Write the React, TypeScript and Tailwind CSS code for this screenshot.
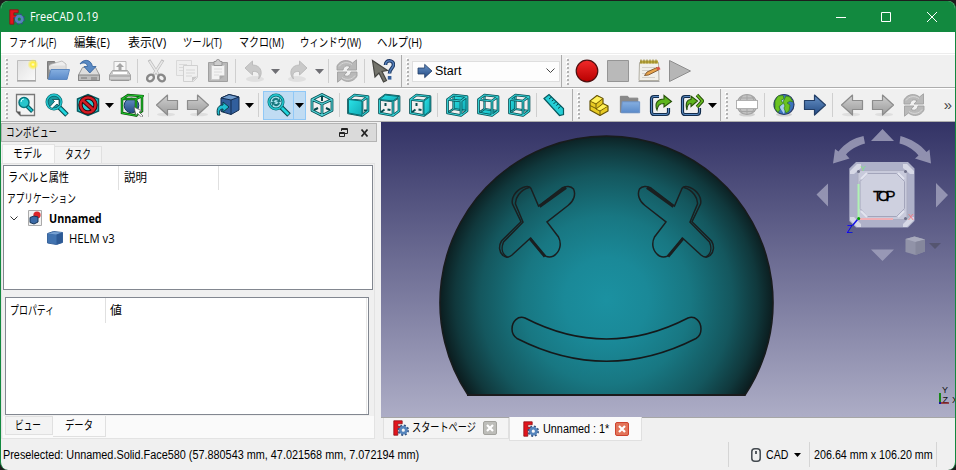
import { useLayoutEffect, useRef, useState, type ReactNode } from "react";

/* A single line of text, condensed or widened horizontally to its column width. */
function Fit({ w, className = "", children }: { w: number; className?: string; children: ReactNode }) {
  const ref = useRef<HTMLSpanElement>(null);
  const [s, setS] = useState(1);
  useLayoutEffect(() => {
    const measure = () => {
      if (ref.current && ref.current.offsetWidth) setS(w / ref.current.offsetWidth);
    };
    measure();
    document.fonts?.ready.then(measure);
  }, [w]);
  return (
    <span className={`flex shrink-0 ${className}`} style={{ width: w }}>
      <span ref={ref} className="block shrink-0 origin-left whitespace-nowrap" style={{ transform: `scaleX(${s})` }}>
        {children}
      </span>
    </span>
  );
}

function Svg({ children, size = 24 }: { children: ReactNode; size?: number }) {
  return (
    <svg width={size} height={size} viewBox="0 0 24 24" className="shrink-0">
      {children}
    </svg>
  );
}

function Logo({ size = 16 }: { size?: number }) {
  return (
    <svg width={size} height={size} viewBox="0 0 16 16" className="shrink-0">
      <path d="M.8.8h8.400v3H4.800v2.500h3v2.500h-3v6.400h-4z" fill="#e3141c" stroke="#8b1217" strokeWidth=".8" />
      <circle cx="10.300" cy="10.200" r="4.600" fill="none" stroke="#31517f" strokeWidth="2.200" strokeDasharray="1.9 1.71" />
      <circle cx="10.300" cy="10.200" r="3" fill="none" stroke="#5585bd" strokeWidth="2.800" />
    </svg>
  );
}

function Handle() {
  return (
    <div className="flex w-[10px] shrink-0 justify-center">
      <svg width="3" height="27" viewBox="0 0 3 27">
        {[0, 4, 8, 12, 16, 20, 24].map((y) => (
          <g key={y}>
            <rect x="0" y={y} width="2" height="2" fill="#fff" />
            <rect x="1" y={y + 1} width="2" height="2" fill="#b3b3b3" />
          </g>
        ))}
      </svg>
    </div>
  );
}

const Sep = () => (
  <div className="flex w-[5px] shrink-0 justify-center">
    <div className="h-6 w-px bg-[#cfcfcf]" />
  </div>
);
const Edge = () => <div className="h-full w-px shrink-0 bg-[#adadad]" />;
const Cell = ({ children }: { children: ReactNode }) => (
  <div className="flex w-[31px] shrink-0 items-center justify-center">{children}</div>
);
const Drop = ({ gray = false, small = false }: { gray?: boolean; small?: boolean }) => (
  <div className="flex w-[13px] shrink-0 justify-center">
    <svg width={small ? 7 : 9} height={small ? 4 : 5} viewBox="0 0 9 5">
      <path d="M0 0h9L4.500 5z" fill={gray ? "#6f6f74" : "#000"} />
    </svg>
  </div>
);

const Defs = () => (
  <svg width="0" height="0" className="absolute">
    <defs>
      <linearGradient id="gray" x2="0" y2="1"><stop stopColor="#d0d0d0" /><stop offset="1" stopColor="#9b9b9b" /></linearGradient>
      <linearGradient id="paper" x2="1" y2="1"><stop stopColor="#e1e1e1" /><stop offset="1" stopColor="#fafafa" /></linearGradient>
      <linearGradient id="blue" x2="0" y2="1"><stop stopColor="#86afe0" /><stop offset="1" stopColor="#5a8ac9" /></linearGradient>
      <linearGradient id="navy" x2="0" y2="1"><stop stopColor="#6792c7" /><stop offset="1" stopColor="#244b84" /></linearGradient>
      <linearGradient id="red" x2="0" y2="1"><stop stopColor="#f22a2a" /><stop offset="1" stopColor="#b80000" /></linearGradient>
      <linearGradient id="cyan" x2="1" y2="1"><stop stopColor="#2ae4e8" /><stop offset="1" stopColor="#12aab5" /></linearGradient>
      <radialGradient id="glow"><stop stopColor="#fffde0" /><stop offset=".4" stopColor="#ffee3a" /><stop offset="1" stopColor="#ffee3a" stopOpacity="0" /></radialGradient>
    </defs>
  </svg>
);

const NewDoc = () => (
  <Svg>
    <path d="M2.500 1.500h18v20h-18z" fill="url(#paper)" stroke="#bdbdbd" />
    <path d="M2 22h19" stroke="#8d8d8d" />
    <circle cx="18" cy="5.500" r="5.500" fill="url(#glow)" />
  </Svg>
);
const OpenDoc = () => (
  <Svg>
    <path d="M1.500 20V2.500h7l1 2h9V20z" fill="#8f8f8f" stroke="#7d7d7d" />
    <path d="M4 5.500l12-3.500 4 3v8H4z" fill="#eee" stroke="#aaa" strokeWidth=".7" />
    <path d="M3 6.500h16v4H3z" fill="#ddd" />
    <path d="M5 10.500h18.500L21 20.500H2.500z" fill="url(#blue)" stroke="#5c88c0" />
  </Svg>
);
const Save = () => (
  <Svg>
    <path d="M5.500 8.500h13l4 7.500v5.500h-21V16z" fill="#ddd" stroke="#989898" />
    <path d="M1.500 16h21v5.500h-21z" fill="#bdbdbd" stroke="#858585" />
    <path d="M4 19h6M15 18v3M17 18v3M19 18v3" stroke="#777" />
    <path d="M3 5C6-.2 14-.2 15.500 7.500H19L12.800 14 7 7.500h3.500C10 4 7 3 3 5z" fill="#5a8ac4" stroke="#315f9b" strokeWidth=".8" />
  </Svg>
);
const Print = () => (
  <Svg>
    <path d="M6 2.500h12v10H6z" fill="#f7f7f7" stroke="#bbb" />
    <path d="m12 4 4 4h-2.500v3h-3V8H8z" fill="#a5a5a5" />
    <path d="M4.500 11.500h15l3 4.500v5h-21v-5z" fill="#ccc" stroke="#a5a5a5" />
    <path d="M5 13h14v2H5z" fill="#fff" />
    <path d="M2 17h20M3 21.500h18" stroke="#999" />
  </Svg>
);
const Cut = () => (
  <Svg>
    <path d="m5 1 9.500 15M19 1 9.500 16" stroke="#bcbcbc" strokeWidth="3" />
    <path d="m5.500 2 8.500 13M18.500 2 10 15" stroke="#e8e8e8" strokeWidth="1.500" />
    <ellipse cx="6.500" cy="19" rx="3.600" ry="3" fill="none" stroke="#888" strokeWidth="2.400" transform="rotate(-35 6.500 19)" />
    <ellipse cx="17.500" cy="19" rx="3.600" ry="3" fill="none" stroke="#888" strokeWidth="2.400" transform="rotate(35 17.500 19)" />
  </Svg>
);
const Copy = () => (
  <Svg>
    <path d="M1.500 1.500h15v15h-15z" fill="#eee" stroke="#d9d9d9" />
    <path d="M4 5.500h8M4 8.500h5M4 11.500h5" stroke="#dadada" />
    <path d="M8.500 6.500h14v12l-4 4h-10z" fill="#f0f0f0" stroke="#d0d0d0" />
    <path d="M11 11h9M11 14h9M11 17h6" stroke="#d6d6d6" />
    <path d="M17 22.500V18l5.500-.5z" fill="#c8c8c8" />
  </Svg>
);
const Paste = () => (
  <Svg>
    <path d="M2.500 3.500h19v19h-19z" fill="#b9b9b9" stroke="#a0a0a0" />
    <path d="M5.500 6.500h13v10l-4 4h-9z" fill="#f3f3f3" stroke="#ccc" />
    <path d="M8 10h8M8 13h8M8 16h5" stroke="#dadada" />
    <path d="M8 2.500h2a2 2 0 0 1 4 0h2v4H8z" fill="#ccc" stroke="#979797" />
    <path d="M13.500 21.500v-5h5.500z" fill="#aaa" />
  </Svg>
);
const Undo = ({ flip = false }: { flip?: boolean }) => (
  <Svg>
    <g transform={flip ? "translate(24 0) scale(-1 1)" : undefined}>
      <ellipse cx="13" cy="20" rx="9" ry="3" fill="#e0e0e0" />
      <path d="M3 9 10.500 2v4c9 0 11 9 6 14 2-6-1-8-6-7.500V16z" fill="#c9c9c9" stroke="#bcbcbc" strokeLinejoin="round" />
    </g>
  </Svg>
);
const Refresh = () => (
  <Svg>
    <path d="M2 11V7C5 1 13 0 17.500 4L21.500.8V11H12l3-3.200c-3-2-6-1-7 3.200z" fill="#b9b9b9" stroke="#a0a0a0" strokeWidth=".9" strokeLinejoin="round" />
    <path d="M22 13v4c-3 6-11 7-15.500 3l-4 3.200V13H12l-3 3.200c3 2 6 1 7-3.200z" fill="#b9b9b9" stroke="#a0a0a0" strokeWidth=".9" strokeLinejoin="round" />
    <path d="M4 7.500C7 3 13 2.500 17 5.500M20 16.500c-3 4.500-9 5-13 2" stroke="#d6d6d6" fill="none" />
  </Svg>
);
const Whats = () => (
  <Svg>
    <path d="m1.500 1.500 15 10-5.500 1 4.500 9-3 1.500-4.500-9-4 4z" fill="#74746c" stroke="#454541" strokeWidth="1.200" />
    <path d="M14.500 6c0-6 8-5 8-.500 0 4-4 3.500-4 9" fill="none" stroke="#203c66" strokeWidth="3.600" />
    <path d="M14.500 6c0-6 8-5 8-.500 0 4-4 3.500-4 9" fill="none" stroke="#5884c0" strokeWidth="1.300" />
    <rect x="16.800" y="17" width="3.600" height="3.600" fill="#345e99" />
  </Svg>
);
const ArrowR = ({ blue = false, flip = false, size = 24 }: { blue?: boolean; flip?: boolean; size?: number }) => (
  <Svg size={size}>
    <g transform={flip ? "translate(24 0) scale(-1 1)" : undefined}>
      {!blue && <ellipse cx="13" cy="21.500" rx="9" ry="1.800" fill="#dedede" />}
      <path d="M1.500 7.500h10V2L22.500 12 11.500 22v-5.500h-10z" fill={blue ? "url(#navy)" : "url(#gray)"} stroke={blue ? "#243f67" : "#8c8c8c"} strokeWidth="1.200" strokeLinejoin="round" />
    </g>
  </Svg>
);
const Note = () => (
  <Svg>
    <path d="M2.500 3.500h19l.5 18H2z" fill="#f0efe9" stroke="#b1aea3" />
    <path d="M3 1.500h18v3H3z" fill="#bba83b" />
    <path d="M4 .500v4M7 .500v4M10 .500v4M13 .500v4M16 .500v4M19 .500v4" stroke="#8d7c27" />
    <path d="M5 8.500h13M5 11.500h11M5 14.500h4M5 18.500h13" stroke="#d2d0c9" />
    <path d="m7.500 16.500 2.500-3.500 10-4.500 1.500 2.500-10 5z" fill="#e8a34a" stroke="#69451e" strokeWidth=".8" />
    <path d="m19 8.800 3-1.300 1.500 2.700-3 1.300z" fill="#d75348" />
    <path d="M1.500 22.500h21" stroke="#a4a4a4" />
  </Svg>
);
const Lens = ({ kind }: { kind: "page" | "arrow" | "sync" }) => (
  <Svg>
    {kind === "page" ? (
      <g>
        <path d="M2.500 1.500h18v21H6.500l-4-4z" fill="#f3f3f3" stroke="#777" strokeWidth="1.300" />
        <path d="M2.500 18.500h4v4z" fill="#555" />
        <path d="m13 13 5.500 5.500" stroke="#07585f" strokeWidth="4" />
        <path d="m13 13 5 5" stroke="#18c0cb" strokeWidth="2" />
        <circle cx="10" cy="9.500" r="5" fill="#27c5cc" stroke="#07747b" strokeWidth="1.500" />
        <path d="M7 9a3 3 0 0 1 3-3" stroke="#c5ffff" fill="none" />
      </g>
    ) : (
      <g>
        <path d="m13 13 9 9" stroke="#07474c" strokeWidth="5" />
        <path d="m13 13 8.500 8.500" stroke="#20d5dd" strokeWidth="2.800" />
        <circle cx="9" cy="9" r="7" fill={kind === "arrow" ? "#1b98a0" : "#a9e3ee"} stroke="#07656b" strokeWidth="3" />
        <circle cx="9" cy="9" r="7.100" fill="none" stroke="#21c5cd" strokeWidth="1.600" />
        {kind === "arrow" ? (
          <path d="m5 13.500 4.500-5L7.500 6.500h6.500v6.500L12 11l-5 4.500z" fill="#fff" stroke="#07464b" strokeWidth=".8" />
        ) : (
          <path d="M5 8c1-4 6-4 7-1V4l2 5H9l2-1c-2-2-4-1-4 1zM13 10c-1 4-6 4-7 1v3L4 9h5l-2 1c2 2 4 1 4-1z" fill="#18777d" />
        )}
      </g>
    )}
  </Svg>
);
const NoSel = () => (
  <Svg>
    <path d="m1.500 6 10.500-4.500L22.500 6v12l-10.500 4.500L1.500 18z" fill="#2cc7ce" stroke="#075c62" strokeWidth="1.500" />
    <circle cx="12" cy="12" r="7.500" fill="none" stroke="#37060a" strokeWidth="4.400" />
    <path d="m6.500 7 11 10" stroke="#37060a" strokeWidth="4.400" />
    <circle cx="12" cy="12" r="7.500" fill="none" stroke="#d41c23" strokeWidth="2.400" />
    <path d="m6.500 7 11 10" stroke="#d41c23" strokeWidth="2.400" />
  </Svg>
);
const BoxSel = () => (
  <Svg>
    <circle cx="11.500" cy="12.500" r="7.300" fill="url(#navy)" stroke="#173a66" />
    <path d="M2 6h14v16.500L2 20zM2 6l6-4 14 1-6 3M22 3v15l-6 4.500" fill="none" stroke="#084d08" strokeWidth="2.500" />
    <path d="M2 6h14v16.500L2 20zM2 6l6-4 14 1-6 3M22 3v15l-6 4.500" fill="none" stroke="#20c42c" strokeWidth="1.200" />
    <path d="m14 14 8 4-3 1 4 4-1.500 1-4-3.500-1.500 2z" fill="#fff" stroke="#555" strokeWidth=".7" />
  </Svg>
);
const LinkBox = () => (
  <Svg>
    <path d="m5 5 8-3.500L23 4v13l-8 4.500-10-3z" fill="#315f9d" stroke="#152e51" />
    <path d="m5 5 10 2 8-3-10-2.500z" fill="#709ccd" stroke="#152e51" />
    <path d="M15 7v14.500" stroke="#152e51" />
    <path d="M1.500 22C0 15 3 12 7 12V9l6 5-6 5v-3c-4 0-4 3-3 6z" fill="#20bdd0" stroke="#093e47" />
  </Svg>
);

const faces: Record<string, string> = {
  front: "M2.500 6.500 16 8v14.500L2.500 20z",
  top: "M2.500 6.500 8.500 2 22 3.500 16 8z",
  right: "M16 8l6-4.500V18l-6 4.500z",
  rear: "M8.500 2 22 3.500V18L8.500 16z",
  bottom: "M2.500 20l6-4L22 18l-6 4.500z",
  left: "M2.500 6.500l6-4.500v14l-6 4z",
};
function Cube({ face }: { face: string }) {
  const back = "M8.500 2v14L2.500 20M8.500 16 22 18";
  const short = "M8.500 10v3M3.500 19.500l4-3M10.500 16.500l3 .5";
  const frame = "M2.500 6.500 16 8v14.500L2.500 20zM2.500 6.500 8.500 2 22 3.500 16 8M22 3.500V18l-6 4.500";
  const dashed = face === "top" || face === "right";
  const rear = face === "rear" || face === "bottom" || face === "left";
  return (
    <Svg>
      {dashed && <path d={short} fill="none" stroke="#064c50" strokeWidth="2" />}
      {face === "front" && <path d="M18 17.500h4" fill="none" stroke="#064c50" strokeWidth="2" />}
      {rear && <path d={faces[face]} fill="url(#cyan)" stroke="#07666b" strokeWidth=".7" />}
      {rear && <path d={back} fill="none" stroke="#064c50" strokeWidth="2.200" />}
      {rear && <path d={back} fill="none" stroke="#35c2c7" strokeWidth=".8" />}
      <path d={frame} fill="none" stroke="#064f54" strokeWidth="2.700" strokeLinejoin="round" />
      <path d={frame} fill="none" stroke="#35cfd3" strokeWidth="1.100" strokeLinejoin="round" />
      {!rear && <path d={faces[face]} fill="url(#cyan)" stroke="#07555a" strokeWidth=".8" />}
    </Svg>
  );
}
const Iso = () => {
  const d = "M2 6.500 12 1.500l10 5v11l-10 5-10-5zM2 6.500l10 4.500 10-4.500M12 11v11.500";
  return (
    <Svg>
      <path d="M12 4v4M4 17l4-2M20 17l-4-2" stroke="#064448" strokeWidth="2" />
      <path d={d} fill="none" stroke="#064f54" strokeWidth="2.800" strokeLinejoin="round" />
      <path d={d} fill="none" stroke="#59dadd" strokeWidth="1.100" strokeLinejoin="round" />
    </Svg>
  );
};
const Ruler = () => (
  <Svg>
    <path d="m2 5.500 5-4L21.500 15.500v6l-4 1z" fill="#25ced6" stroke="#075a60" strokeWidth="1.200" />
    <path d="m9.500 4-2.500 2M11.800 6.500l-2 1.500M14 8.500 11.500 11M16.300 11l-2 1.500M18.500 13.500l-2.500 2" stroke="#064448" />
  </Svg>
);
const Part = () => (
  <Svg>
    <path d="m3 8 7-5.500 6 3v5l5 2.500v5l-8 4.500L3 17z" fill="#e8ca22" stroke="#665509" strokeWidth="1.200" strokeLinejoin="round" />
    <path d="m3 8 6 3 7-5.500M9 11v5l7-5.500M9 16l4 2 8-5M13 18v4.500M3 12.500l6 3" fill="none" stroke="#705e0b" />
    <path d="m4 8 6-4.500 5 2L9 10z" fill="#fff15b" />
    <path d="m10 16 6-4.500 4 1.700-7 4z" fill="#fff15b" />
  </Svg>
);
const Folder = () => (
  <Svg size={22}>
    <path d="M1.500 20V2.500h8l1.500 2h9.500V20z" fill="#888" stroke="#808080" />
    <path d="M3.500 8.500h19v12h-20z" fill="url(#blue)" stroke="#6a92c8" />
  </Svg>
);
const Export = ({ twice = false }: { twice?: boolean }) => (
  <Svg>
    <path d="M10 3.500H5A2.500 2.500 0 0 0 2.500 6v13A2.500 2.500 0 0 0 5 21.500h12a2.500 2.500 0 0 0 2.500-2.500v-4" fill="none" stroke="#122c4b" strokeWidth="3.200" />
    <path d="M10 3.500H5A2.500 2.500 0 0 0 2.500 6v13A2.500 2.500 0 0 0 5 21.500h12a2.500 2.500 0 0 0 2.500-2.500v-4" fill="none" stroke="#5989c0" strokeWidth="1" />
    {twice && <path d="m17 2 5.500 6-5.500 6" fill="none" stroke="#28520b" strokeWidth="3.400" />}
    {twice && <path d="m17.200 2.300 5.200 5.700-5.200 5.700" fill="none" stroke="#69bd20" strokeWidth="1.600" />}
    <path d={twice ? "M7 17C5 10 7 6.500 11 6.500V3l6.500 5-6.500 5.500v-3c-3 0-4 2-4 6.500z" : "M8 17C5 10 9 6 15 6V2.500L22.500 8.500l-7.500 5.500v-3.500c-5 0-6 2-7 6.500z"} fill="#5db51e" stroke="#28520b" strokeWidth="1.100" />
  </Svg>
);
const Globe = ({ off = false }: { off?: boolean }) => (
  <Svg>
    <ellipse cx="12" cy="21.500" rx="8" ry="2" fill="#d0d0d0" />
    <circle cx="12" cy="11.500" r="10" fill={off ? "#c2c2c2" : "#3b72bd"} stroke={off ? "#a2a2a2" : "#283c67"} strokeWidth="1.200" />
    {off ? (
      <g>
        <path d="M5 5h14M4 18.500h16M12 2v20M7 3c-3 5-3 12 0 17M17 3c3 5 3 12 0 17" fill="none" stroke="#a5a5a5" />
        <rect x="1.500" y="7.500" width="21" height="8" fill="#fff" stroke="#b0b0b0" />
      </g>
    ) : (
      <g>
        <path d="M10 3 8 15l4 6 2-9z" fill="#a9cdf3" />
        <path d="m3 8 3-5 5-.500 1 3-3 2 2 3-4 3 1 3-2 3-3-4zM14 3l4 1 3 5-3-1-3 2 3 2-1 6-3 2-2-5 1-2-2-4z" fill="#6bc322" stroke="#39811a" strokeWidth=".8" />
      </g>
    )}
  </Svg>
);

function Close({ active = false }: { active?: boolean }) {
  return (
    <svg width="14" height="14" viewBox="0 0 14 14" className="shrink-0">
      <rect x=".5" y=".5" width="13" height="13" rx="1.500" fill={active ? "#e27459" : "#bdbdb9"} stroke={active ? "#ce432f" : "#a2a29d"} />
      <path d="m4 4 6 6M10 4l-6 6" stroke="#fff" strokeWidth="2.200" />
    </svg>
  );
}

const EYE =
  "M538.500 206 531 188.500C529.500 186 526 186.300 523 187.500C515 191 511 198 512.500 204L521 221.700 501.500 241C498.500 246 499 252 503 255.500C506 258 509 257.500 512 255L530.500 238 541 252.500C545 257 549 258 553.500 256C560 252 562 244 558.500 237L547 222 568 205.500C574 201 576 194 573.500 189C571 186 566 185.500 562 188Z";

function Scene() {
  return (
    <svg width="574" height="295" viewBox="381 122 574 295" className="block shrink-0">
      <defs>
        <radialGradient id="ball" gradientUnits="userSpaceOnUse" cx="606.500" cy="300" r="168">
          <stop stopColor="#1b91a1" />
          <stop offset=".25" stopColor="#1a8998" />
          <stop offset=".5" stopColor="#187782" />
          <stop offset=".75" stopColor="#14575e" />
          <stop offset=".9" stopColor="#10383c" />
          <stop offset="1" stopColor="#0b1b1d" />
        </radialGradient>
        <linearGradient id="bg" x2="0" y2="1">
          <stop stopColor="#333366" />
          <stop offset="1" stopColor="#adadc6" />
        </linearGradient>
      </defs>
      <rect x="381" y="122" width="574" height="295" fill="url(#bg)" />
      <path d="M468 395A166.500 166.500 0 1 1 745 395Z" fill="url(#ball)" stroke="#181c1d" strokeWidth="1.600" />
      <path d="M467 395h278.500" stroke="#1b1b1d" strokeWidth="2" />
      {["", "translate(1213 0) scale(-1 1)"].map((t) => (
        <g key={t} transform={t || undefined} fill="none" stroke="#1a1f20" strokeWidth="1.500">
          <path d={EYE} />
          <path d="M529 187.500C520 190 515 198 515.500 204L523 222 503.500 242C501 248 502 254 507 257" />
          <path d="M539.500 206.500 566 187.500M530 238.500 545 256.500" strokeWidth="3" />
        </g>
      ))}
      <path
        d="M525 318Q606.500 360 688 318C695 315.500 701 321 701 329C701 333 699.500 336.500 696 338.500Q606.500 384 517 338.500C513.500 336 512 333 512 329C512 321 518 315.500 525 318Z"
        fill="none"
        stroke="#15191a"
        strokeWidth="1.500"
      />

      {/* navigation cube */}
      <g fill="#a2a2bd" fillOpacity=".82">
        <path d="M882.500 129 894 141h-23zM882.500 261 894 249.500h-23zM816.500 194.500l11.500-11v23zM948 195l-12-12v24.500z" />
        <path d="M863.500 136 865 143.500C856 146 850 150 846 154.500L849.500 158.500 833 163.500 835 149 838.500 151.500C845 143 854 138 863.500 136z" />
        <path d="M900.500 136 899.500 143.500C909 146 915 151 918.500 155.500L915 158.500 931 163.500 929.500 149.500 926.500 152C920 144 911 139 900.500 136z" />
      </g>
      <path d="M856 162h52l6.500 6.500v52.500l-6.500 6.500h-52l-6.700-6.500v-52.500z" fill="#aeb1c9" />
      <path d="M858 170.500h49v49h-49z" fill="#c8cadb" stroke="#acaec2" />
      <g fill="#d6d8e6">
        <path d="m850 171 7-7h4v4l-7 6h-4zM903 164h4l7 7v3h-4l-7-6zM850 217h4l7 7v3h-4l-7-7zM914 217v3l-7 7h-4v-3l7-7z" />
      </g>
      <path d="M867.500 173.500h29l8 8v27l-8 8h-29l-7.500-8v-27z" fill="#ced0df" stroke="#a3a5bb" />
      <path d="m861 179 6-6M898 173l6 6M861 211l6 6M898 217l6-6" stroke="#e2e4ef" strokeWidth="2" />
      <g fill="#6e7089">
        <circle cx="858.500" cy="171.500" r="1.500" /><circle cx="905.500" cy="171.500" r="1.500" /><circle cx="905.500" cy="218.500" r="1.500" />
      </g>
      <path d="M858.500 184v34" stroke="#b0f2b4" strokeWidth="2" />
      <path d="M860 219h33" stroke="#f0b0b6" strokeWidth="2" />
      <path d="m857.500 219.500-5 6" stroke="#1414e8" strokeWidth="1.500" />
      <circle cx="858.700" cy="218.500" r="1.500" fill="#00a000" />
      <g fontFamily="Liberation Sans, sans-serif">
        <text x="873" y="200.500" fontSize="15" textLength="22.500" lengthAdjust="spacing" fill="#000" stroke="#000" strokeWidth=".3">TOP</text>
        <text x="860.500" y="170.500" fontSize="8" fill="#7be57b">Y</text>
        <text x="908" y="219.500" fontSize="9" fill="#ee7f86">X</text>
        <text x="846.500" y="233" fontSize="10" fill="#0000f0">Z</text>
        <text x="942" y="392.500" fontSize="9" fill="#111">Y</text>
        <text x="942.500" y="402.500" fontSize="9" fill="#111">Z</text>
        <text x="952" y="402.500" fontSize="9" fill="#111">X</text>
      </g>
      <path d="M940 393v9" stroke="#178717" strokeWidth="2" />
      <path d="M941 403h8" stroke="#8b2020" strokeWidth="1.500" />
      <rect x="939" y="402" width="2" height="2" fill="#1616a0" />
      <path d="m905.500 239 9-2.500 10.500 3v12l-9.500 3.500-10-3z" fill="#9193a8" />
      <path d="m905.500 239 9-2.500 10.500 3-9.500 2.500z" fill="#a8aabd" />
      <path d="M915.500 242v13l9.500-3.500v-12z" fill="#85879c" />
      <path d="M929 243h12l-6 6z" fill="#555570" />
    </svg>
  );
}

const menus: [string, number, string][] = [
  ["ファイル(F)", 47, "mr-[18px]"],
  ["編集(E)", 36, "mr-[18px]"],
  ["表示(V)", 38, "mr-[17px]"],
  ["ツール(T)", 39, "mr-[17px]"],
  ["マクロ(M)", 45, "mr-[16px]"],
  ["ウィンドウ(W)", 61, "mr-[16px]"],
  ["ヘルプ(H)", 45, ""],
];

export default function App() {
  return (
    <div className="h-[470px] w-[956px] overflow-hidden bg-[#1d1d1d] pt-px font-['Liberation_Sans','Noto_Sans_CJK_JP',sans-serif] text-[12px] leading-4 text-black">
      <Defs />
      <div className="flex h-[469px] flex-col overflow-hidden rounded-lg border-x border-[#12893f] bg-[#f0f0f0]">
        {/* title bar */}
        <header className="flex h-[31px] shrink-0 items-center bg-[#12893f] pl-2 text-white">
          <Logo />
          <Fit w={68} className="ml-[5px] font-['Open_Sans',sans-serif]">FreeCAD 0.19</Fit>
          <svg width="103" height="12" viewBox="0 0 103 12" className="mr-4 ml-auto" fill="none" stroke="#fff">
            <path d="M0 6.500h10M45.500 1.500h9v9h-9zM91 1l10 10M101 1 91 11" />
          </svg>
        </header>

        <nav className="flex h-[22px] shrink-0 items-center border-b border-[#ededed] bg-white pl-2 font-['Open_Sans','Noto_Sans_CJK_JP',sans-serif]">
          {menus.map(([label, w, gap]) => (
            <Fit key={label} w={w} className={gap}>{label}</Fit>
          ))}
        </nav>

        {/* file, workbench and macro tools */}
        <div className="flex h-[34px] shrink-0 items-center border-t border-b border-t-white border-b-[#adadad]">
          <Handle />
          <Cell><NewDoc /></Cell><Cell><OpenDoc /></Cell><Cell><Save /></Cell><Cell><Print /></Cell>
          <Sep />
          <Cell><Cut /></Cell><Cell><Copy /></Cell><Cell><Paste /></Cell>
          <Sep />
          <Cell><Undo /></Cell><Drop gray /><Cell><Undo flip /></Cell><Drop gray />
          <Sep />
          <Cell><Refresh /></Cell>
          <Sep />
          <Cell><Whats /></Cell>
          <div className="ml-[3px] h-full"><Edge /></div>
          <Handle />
          <div className="flex h-[21px] w-[148px] shrink-0 items-center border border-[#dedede] bg-[#fdfdfd] pr-1 pl-[4px]">
            <ArrowR blue size={16} />
            <Fit w={26} className="ml-[2px]">Start</Fit>
            <svg width="9" height="6" viewBox="0 0 9 6" className="ml-auto" fill="none" stroke="#444"><path d="m.5.5 4 4 4-4" /></svg>
          </div>
          <div className="ml-[1px] h-full"><Edge /></div>
          <div className="-mr-px"><Handle /></div>
          <Cell><Svg><circle cx="12" cy="12" r="10.800" fill="url(#red)" stroke="#4d1010" strokeWidth="1.200" /></Svg></Cell>
          <Cell><Svg><path d="M1.500 1.500h21v21h-21z" fill="#b9b9b9" stroke="#959595" /></Svg></Cell>
          <Cell><Note /></Cell>
          <Cell><Svg><path d="M1.500 1.500 22.500 12l-21 10.500z" fill="#b6b6b6" stroke="#8e8e8e" /></Svg></Cell>
        </div>

        {/* view, structure and navigation tools */}
        <div className="flex h-[34px] shrink-0 items-center border-t border-b border-t-white border-b-[#adadad]">
          <div className="-mr-px"><Handle /></div>
          <Cell><Lens kind="page" /></Cell><Cell><Lens kind="arrow" /></Cell><Cell><NoSel /></Cell>
          <Drop />
          <div className="-mr-px"><Cell><BoxSel /></Cell></div>
          <Sep />
          <Cell><ArrowR flip /></Cell><Cell><ArrowR /></Cell>
          <div className="-ml-px"><Cell><LinkBox /></Cell></div>
          <Drop />
          <div className="mr-[2px]"><Sep /></div>
          <div className="flex h-[29px] shrink-0 items-center border border-[#90c8f6] bg-[#c0dcf3]">
            <div className="flex h-full w-[30px] items-center justify-center border-r border-[#90c8f6]"><Lens kind="sync" /></div>
            <div className="flex w-[11px] justify-center"><Drop /></div>
          </div>
          <Cell><Iso /></Cell>
          <Sep />
          <Cell><Cube face="front" /></Cell><Cell><Cube face="top" /></Cell><Cell><Cube face="right" /></Cell>
          <div className="mr-px"><Sep /></div>
          <Cell><Cube face="rear" /></Cell><Cell><Cube face="bottom" /></Cell><Cell><Cube face="left" /></Cell>
          <Sep />
          <div className="-ml-px"><Cell><Ruler /></Cell></div>
          <div className="ml-[3px] h-full"><Edge /></div>
          <Handle />
          <Cell><Part /></Cell><Cell><Folder /></Cell><Cell><Export /></Cell><Cell><Export twice /></Cell>
          <div className="-ml-px"><Drop /></div>
          <div className="ml-px h-full"><Edge /></div>
          <Handle />
          <Cell><Globe off /></Cell>
          <div className="mr-px"><Sep /></div>
          <Cell><Globe /></Cell><Cell><ArrowR blue /></Cell>
          <div className="mr-px"><Sep /></div>
          <Cell><ArrowR flip /></Cell><Cell><ArrowR /></Cell><Cell><Refresh /></Cell>
          <span className="mr-[3px] ml-auto text-[15px] text-[#444]">»</span>
        </div>

        <main className="flex h-[317px] shrink-0">
          {/* combo view dock */}
          <aside className="flex w-[380px] shrink-0 flex-col pt-px">
            <div className="flex h-[19px] w-[376px] shrink-0 items-center border border-[#b4b4b4] bg-[#dadada] pr-[7px] pl-[4px]">
              <Fit w={51}>コンボビュー</Fit>
              <svg width="30" height="10" viewBox="0 0 30 10" className="ml-auto" fill="none" stroke="#222">
                <path d="M2.500 3V.500h6v5H6M2 1.500h7M.5 4.500h5v4h-5zM0 5.500h6" />
                <path d="m22.500 1.500 6 7M28.500 1.500l-6 7" strokeWidth="1.800" />
              </svg>
            </div>
            <div className="flex h-[21px] shrink-0 items-end pl-px">
              <div className="flex h-[19px] w-[53px] items-center justify-center border border-b-0 border-[#e3e3e3] bg-[#fafafa] pr-[3px]"><Fit w={29}>モデル</Fit></div>
              <div className="flex h-[17px] w-[47px] items-center justify-center border border-b-0 border-l-0 border-[#e0e0e0] bg-[#f3f3f3]"><Fit w={26}>タスク</Fit></div>
            </div>
            <div className="flex h-[276px] w-[374px] flex-col border border-[#e3e3e3] bg-[#f0f0f0] pl-px">
              <section className="mt-px h-[125px] w-[370px] shrink-0 border border-[#828790] bg-white">
                <div className="flex h-6">
                  <div className="flex w-[115px] items-center border-r border-[#e0e0e0] pl-[4px]"><Fit w={61}>ラベルと属性</Fit></div>
                  <div className="flex w-[100px] items-center border-r border-[#e0e0e0] pl-[5px]"><Fit w={23}>説明</Fit></div>
                </div>
                <div className="flex h-[18px] items-center pl-[3px]"><Fit w={69}>アプリケーション</Fit></div>
                <div className="flex h-5 items-center pl-[6px] font-['Open_Sans',sans-serif] font-bold">
                  <svg width="8" height="5" viewBox="0 0 8 5" fill="none" stroke="#333"><path d="m.5.5 3.500 3.500L7.500.5" /></svg>
                  <svg width="14" height="16" viewBox="0 0 14 16" className="ml-[10px]">
                    <path d="M.5.5h13v15H.5z" fill="#f1f1f1" stroke="#aaa" />
                    <circle cx="9" cy="5" r="3.600" fill="#dc2429" />
                    <path d="m2 7.500 4-1.500 4 1v5l-4 2-4-1.500z" fill="#3b6aa6" stroke="#173456" />
                  </svg>
                  <Fit w={53} className="ml-[7px] pt-px">Unnamed</Fit>
                </div>
                <div className="flex h-5 items-center pl-[43px] font-['Open_Sans',sans-serif]">
                  <svg width="16" height="14" viewBox="0 0 16 14">
                    <path d="m.5 2.500 6-2 9 1v10l-6 2-9-1.500z" fill="#4173b0" stroke="#3a659c" />
                    <path d="m1 2.500 6-1.500 8 .5-5.500 2z" fill="#77a1d2" />
                    <path d="M9.500 3.500v10l6-2V1.500z" fill="#2d5a96" />
                  </svg>
                  <Fit w={46} className="ml-[6px] pt-px">HELM v3</Fit>
                </div>
              </section>
              <section className="mt-[7px] ml-[2px] flex h-[118px] w-[364px] shrink-0 border border-[#828790] bg-white">
                <div className="flex h-[25px] w-[100px] items-center border-r border-[#e0e0e0] pl-[4px]"><Fit w={44}>プロパティ</Fit></div>
                <div className="flex h-[25px] items-center pl-[4px]"><Fit w={12}>値</Fit></div>
                <div className="mr-px ml-auto w-px bg-[#e8e8e8]" />
              </section>
              <div className="mt-px flex h-[22px] shrink-0 items-start bg-[#fafafa] pl-[2px]">
                <div className="flex h-[19px] w-12 items-center justify-center border border-[#e0e0e0] bg-[#f3f3f3] pr-[2px]"><Fit w={26}>ビュー</Fit></div>
                <div className="flex h-[21px] w-[53px] items-center justify-center border border-t-0 border-l-0 border-[#e0e0e0] bg-[#fafafa]"><Fit w={28}>データ</Fit></div>
              </div>
            </div>
          </aside>

          {/* 3D view with its document tabs */}
          <section className="flex w-[574px] shrink-0 flex-col">
            <Scene />
            <div className="flex h-[22px] shrink-0 items-start border-t border-[#a6a6a6] pl-[2px]">
              <div className="flex h-[21px] w-[126px] items-center border border-t-0 border-[#e0e0e0] bg-[#f4f4f4] pl-[9px]">
                <Logo />
                <Fit w={64} className="ml-[3px]">スタートページ</Fit>
                <div className="ml-[7px]"><Close /></div>
              </div>
              <div className="-mt-px flex h-6 w-[133px] shrink-0 items-center border border-t-0 border-[#e0e0e0] bg-[#fafafa] pl-[13px]">
                <Logo />
                <Fit w={66} className="ml-[4px]">Unnamed : 1*</Fit>
                <div className="ml-[6px]"><Close active /></div>
              </div>
            </div>
          </section>
        </main>

        <footer className="flex h-[30px] shrink-0 items-center pt-px pl-[2px]">
          <Fit w={416}>Preselected: Unnamed.Solid.Face580 (57.880543 mm, 47.021568 mm, 7.072194 mm)</Fit>
          <div className="ml-auto flex items-center">
            <div className="h-[25px] w-px bg-[#d5d5d5]" />
            <svg width="10" height="14" viewBox="0 0 10 14" className="ml-[22px]" fill="none" stroke="#444a50">
              <rect x=".8" y=".8" width="8.400" height="12.400" rx="3" strokeWidth="1.500" />
              <path d="M5 3v3" strokeWidth="1.800" />
            </svg>
            <Fit w={22} className="ml-[5px]">CAD</Fit>
            <div className="ml-[3px]"><Drop small /></div>
            <div className="ml-[5px] h-[25px] w-px bg-[#d5d5d5]" />
            <Fit w={119} className="ml-[4px]">206.64 mm x 106.20 mm</Fit>
            <div className="mr-[18px] ml-[3px] h-[25px] w-px bg-[#d5d5d5]" />
          </div>
        </footer>
      </div>
    </div>
  );
}
